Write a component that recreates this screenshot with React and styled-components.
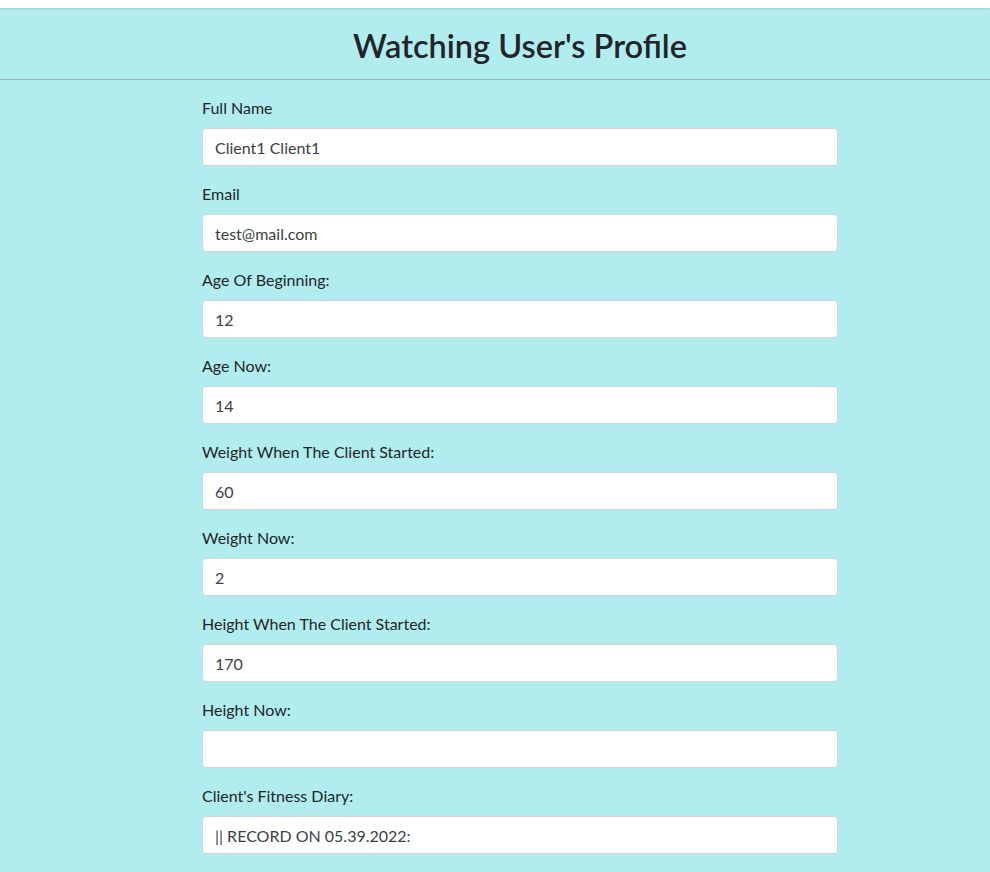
import React from "react";
import styled, { createGlobalStyle } from "styled-components";

const Global = createGlobalStyle`
  html, body { margin: 0; padding: 0; }
  body {
    background: #b1edee;
    font-family: "Lato", "Noto Sans", sans-serif;
    color: #212529;
    font-size: 16px;
    line-height: 1.5;
  }
`;

const TopStrip = styled.div`
  height: 8px;
  background: #ffffff;
  box-shadow: 0 1px 2px rgba(0,0,0,0.12);
  position: relative;
`;

const Header = styled.header`
  box-sizing: border-box;
  height: 72px;
  padding: 4px 0 0 50px;
  display: flex;
  align-items: center;
  justify-content: center;
  border-bottom: 1px solid #8fb9bb;
`;

const Title = styled.h1`
  margin: 0;
  font-size: 32.5px;
  font-weight: 600;
  line-height: 1.2;
  color: #212529;
`;

const Form = styled.form`
  width: 636px;
  margin: 16px 0 0 202px;
`;

const Group = styled.div`
  margin-bottom: 16px;
`;

const Label = styled.label`
  display: block;
  margin-bottom: 8px;
  font-size: 16px;
  line-height: 24px;
  color: #212529;
`;

const Input = styled.input`
  display: block;
  box-sizing: border-box;
  width: 100%;
  height: 38px;
  padding: 6px 12px;
  font-family: inherit;
  font-size: 16px;
  line-height: 24px;
  color: #3a3f44;
  background: #fff;
  border: 1px solid #ced4da;
  border-radius: 4px;
  outline: none;
`;

const fields = [
  ["Full Name", "Client1 Client1"],
  ["Email", "test@mail.com"],
  ["Age Of Beginning:", "12"],
  ["Age Now:", "14"],
  ["Weight When The Client Started:", "60"],
  ["Weight Now:", "2"],
  ["Height When The Client Started:", "170"],
  ["Height Now:", ""],
  ["Client's Fitness Diary:", "|| RECORD ON 05.39.2022:"],
];

export default function App() {
  return (
    <>
      <Global />
      <TopStrip />
      <Header>
        <Title>Watching User's Profile</Title>
      </Header>
      <Form>
        {fields.map(([label, value]) => (
          <Group key={label}>
            <Label>{label}</Label>
            <Input defaultValue={value} readOnly />
          </Group>
        ))}
      </Form>
    </>
  );
}
